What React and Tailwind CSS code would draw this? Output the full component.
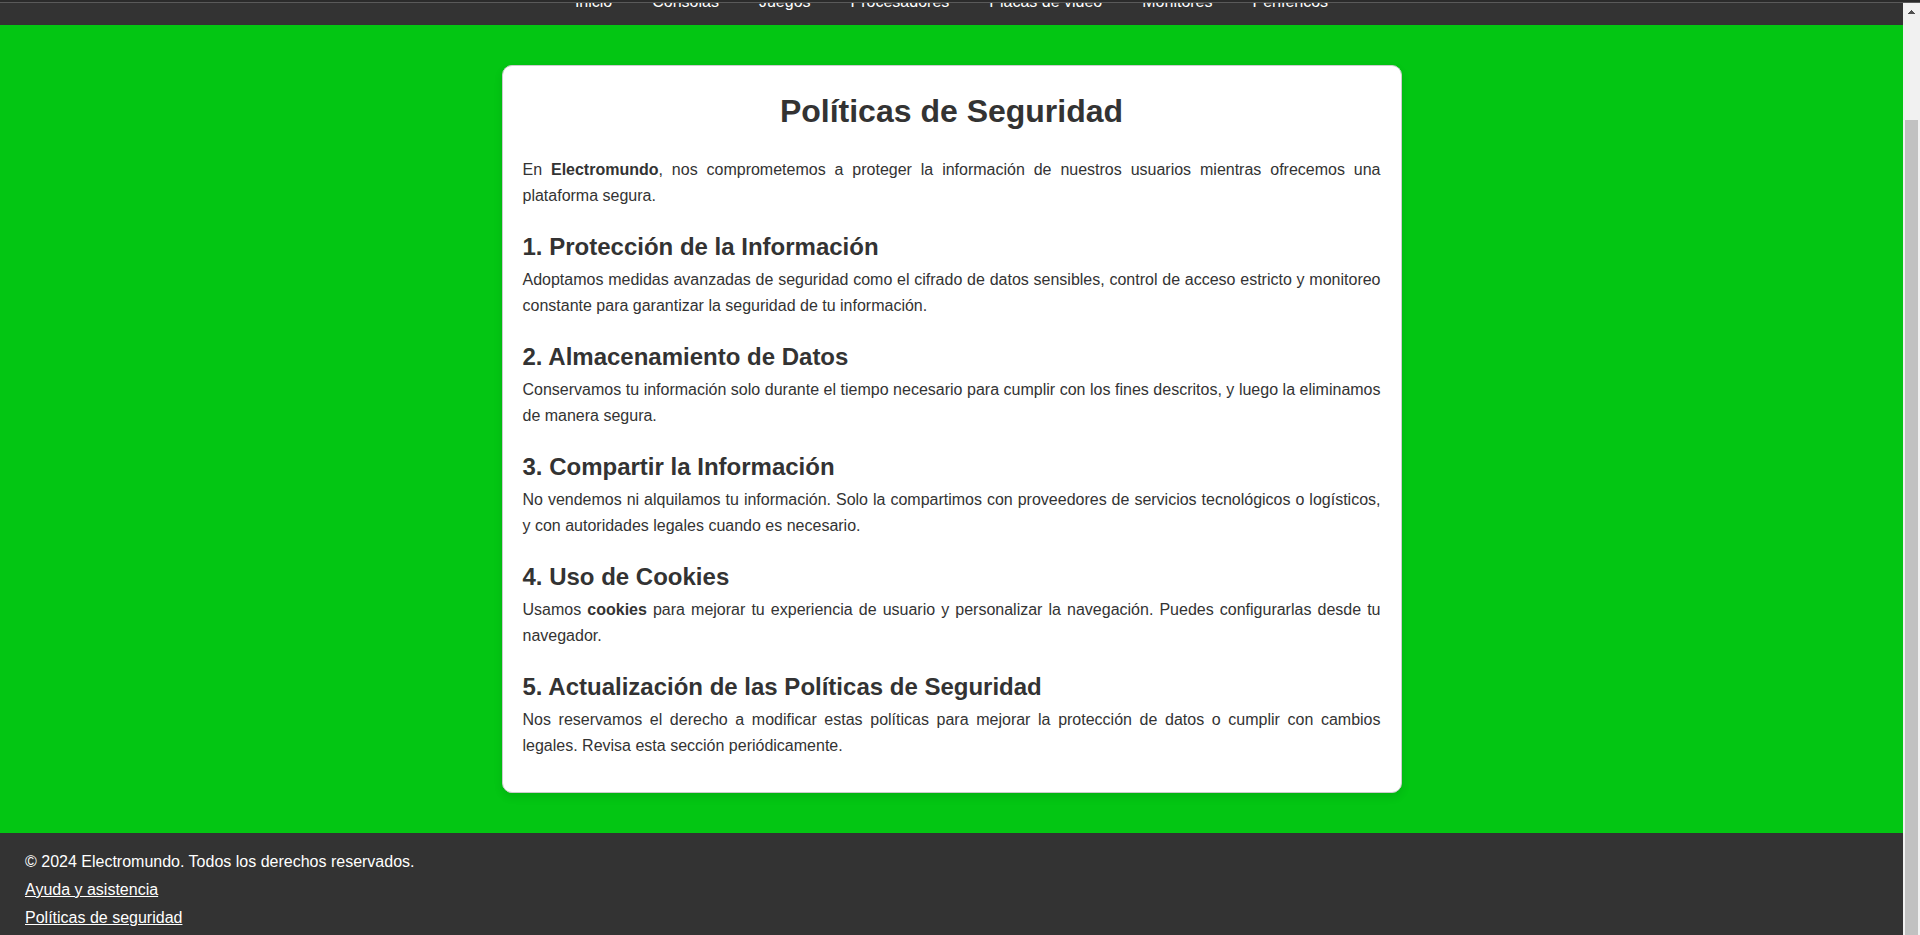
import React from "react";

const links = ["Inicio", "Consolas", "Juegos", "Procesadores", "Placas de video", "Monitores", "Periféricos"];

const sections = [
  {
    title: "1. Protección de la Información",
    body: "Adoptamos medidas avanzadas de seguridad como el cifrado de datos sensibles, control de acceso estricto y monitoreo constante para garantizar la seguridad de tu información.",
  },
  {
    title: "2. Almacenamiento de Datos",
    body: "Conservamos tu información solo durante el tiempo necesario para cumplir con los fines descritos, y luego la eliminamos de manera segura.",
  },
  {
    title: "3. Compartir la Información",
    body: "No vendemos ni alquilamos tu información. Solo la compartimos con proveedores de servicios tecnológicos o logísticos, y con autoridades legales cuando es necesario.",
  },
  {
    title: "4. Uso de Cookies",
    body: (
      <>
        Usamos <strong>cookies</strong> para mejorar tu experiencia de usuario y personalizar la navegación. Puedes
        configurarlas desde tu navegador.
      </>
    ),
  },
  {
    title: "5. Actualización de las Políticas de Seguridad",
    body: "Nos reservamos el derecho a modificar estas políticas para mejorar la protección de datos o cumplir con cambios legales. Revisa esta sección periódicamente.",
  },
];

function Header() {
  return (
    <header className="overflow-hidden bg-[#333333]">
      <nav aria-label="Principal" className="-mt-[10px] pb-[14px]">
        <ul className="flex justify-center gap-10 leading-[18px] text-white">
          {links.map((name) => (
            <li key={name}>
              <a href="#">{name}</a>
            </li>
          ))}
        </ul>
      </nav>
    </header>
  );
}

function Policies() {
  return (
    <main className="grow px-5 py-10">
      <article className="mx-auto max-w-[900px] rounded-[10px] border border-[#cccccc] bg-white px-5 pt-5 pb-[33px] leading-[26px] text-[#333333] shadow-[0_4px_8px_rgba(0,0,0,0.1)]">
        <h1 className="mb-5 text-center text-[32px] leading-[51px] font-bold">Políticas de Seguridad</h1>
        <p className="text-justify">
          En <strong>Electromundo</strong>, nos comprometemos a proteger la información de nuestros usuarios mientras
          ofrecemos una plataforma segura.
        </p>
        {sections.map((section) => (
          <section key={section.title} className="mt-5">
            <h2 className="mb-[2px] text-2xl leading-[36px] font-bold">{section.title}</h2>
            <p className="text-justify">{section.body}</p>
          </section>
        ))}
      </article>
    </main>
  );
}

function Footer() {
  return (
    <footer className="flex flex-col items-start gap-[10px] bg-[#333333] px-[25px] pt-5 pb-2 leading-[18px] text-white">
      <p>© 2024 Electromundo. Todos los derechos reservados.</p>
      <a href="#" className="underline">
        Ayuda y asistencia
      </a>
      <a href="#" className="underline">
        Políticas de seguridad
      </a>
    </footer>
  );
}

function Scrollbar() {
  return (
    <div aria-hidden="true" className="flex w-[17px] shrink-0 flex-col bg-[#f1f1f1] px-[2px]">
      <div className="flex h-[17px] items-center justify-center">
        <svg width="7" height="4" viewBox="0 0 7 4" shapeRendering="crispEdges" fill="#505050">
          <path d="M3 0h1v1h1v1h1v1h1v1H0V3h1V2h1V1h1z" />
        </svg>
      </div>
      <div className="mt-[100px] grow bg-[#c1c1c1]" />
    </div>
  );
}

export default function App() {
  return (
    <div className="flex min-h-screen flex-col border-t-2 border-[#2b2b2b] font-['Liberation_Sans',Arial,sans-serif] text-base">
      <div className="flex grow border-t border-[#5a5a5a]">
        <div className="flex min-w-0 grow flex-col border-b border-b-[#2b2b2b] bg-[#03c613]">
          <Header />
          <Policies />
          <Footer />
        </div>
        <Scrollbar />
      </div>
    </div>
  );
}
